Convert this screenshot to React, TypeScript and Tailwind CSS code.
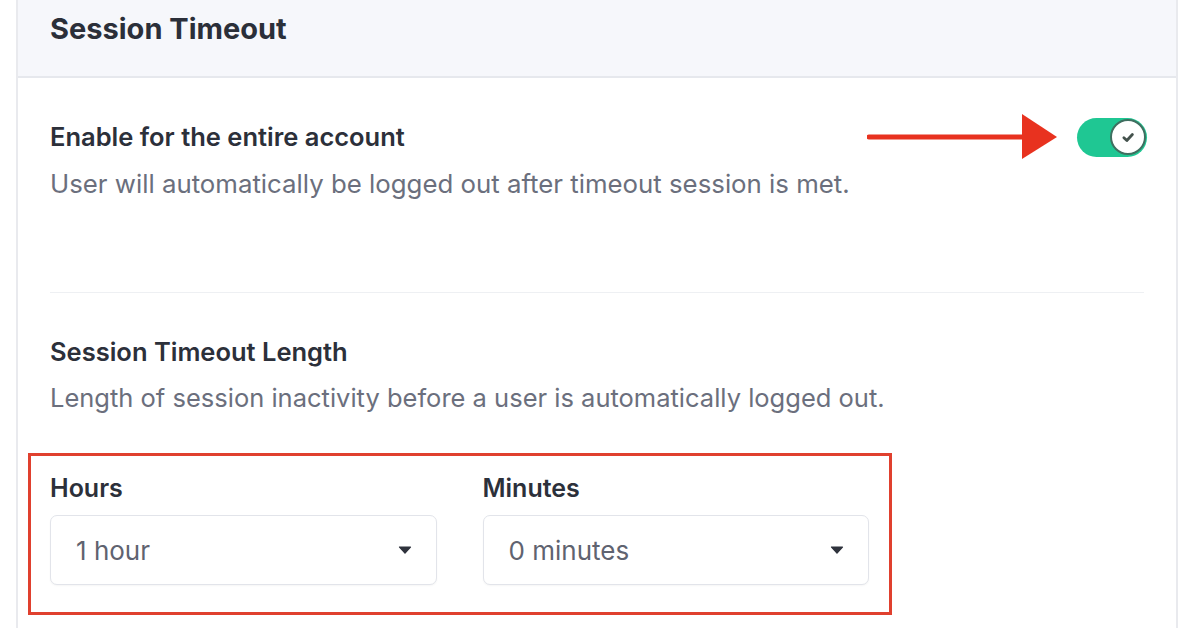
// Session timeout settings card — account-wide toggle and timeout length selects
import { useState } from 'react'

function Toggle({ on, onChange }: { on: boolean; onChange: (v: boolean) => void }) {
  return (
    <button
      onClick={() => onChange(!on)}
      className={`relative flex h-[39px] w-[70px] shrink-0 items-center rounded-full px-[1px] ${
        on ? 'justify-end bg-[#1fc793]' : 'justify-start bg-[#d7dbe2]'
      }`}
    >
      <span className="flex h-[36px] w-[36px] items-center justify-center rounded-full border-[2px] border-[#3f6f60] bg-white">
        {on && (
          <svg width="18" height="18" viewBox="0 0 14 14" fill="none">
            <path d="M3.8 7.6l2.3 2.1 4.3-4.6" stroke="#44524d" strokeWidth="2.2" strokeLinecap="round" strokeLinejoin="round" />
          </svg>
        )}
      </span>
    </button>
  )
}

function SelectBox({ label, value }: { label: string; value: string }) {
  return (
    <div className="flex flex-col">
      <div className="mb-[15px] text-[25px] font-semibold leading-[24px] text-[#2c303a]">{label}</div>
      <div className="flex h-[70px] items-center justify-between rounded-[7px] border border-[#e2e4ea] bg-white pl-[25px] pr-[24px] shadow-[0_1px_2px_rgba(0,0,0,0.04)]">
        <span className="text-[26px] text-[#5f6370]">{value}</span>
        <svg width="14" height="8" viewBox="0 0 14 8">
          <path d="M1.5 1h11L7 7.2z" fill="#2f333d" stroke="#2f333d" strokeWidth="1.2" strokeLinejoin="round" />
        </svg>
      </div>
    </div>
  )
}

export default function App() {
  const [enabled, setEnabled] = useState(true)

  return (
    <div
      className="h-[628px] w-[1196px] overflow-hidden bg-white pl-[16px] pr-[18px]"
      style={{ fontFamily: 'Inter, "Open Sans", Arial, sans-serif' }}
    >
      <div className="h-full border-x-[2px] border-[#e9eaee]">
        {/* Header */}
        <div className="flex h-[78px] items-center border-b-[2px] border-[#e6e8ed] bg-[#f6f7fb] px-[32px] pb-[18px]">
          <h1 className="text-[29px] font-bold text-[#2b2f39]">Session Timeout</h1>
        </div>

        <div className="px-[32px]">
          {/* Enable row */}
          <div className="relative flex items-start justify-between pt-[40px]">
            <div>
              <div className="text-[25.5px] font-semibold leading-[38px] text-[#2c303a]">Enable for the entire account</div>
              <div className="mt-[13px] text-[25.8px] leading-[30px] text-[#6b6f7d]">
                User will automatically be logged out after timeout session is met.
              </div>
            </div>
            <div className="mr-[-3px] mt-[-4px] flex items-center">
              {/* annotation arrow */}
              <svg className="mr-[18px]" width="192" height="46" viewBox="0 0 192 46">
                <line x1="2" y1="23" x2="160" y2="23" stroke="#e8321f" strokeWidth="5" strokeLinecap="round" />
                <path d="M155 0L190 23L155 45z" fill="#e8321f" />
              </svg>
              <Toggle on={enabled} onChange={setEnabled} />
            </div>
          </div>

          <div className="mt-[93px] h-px bg-[#eef0f3]" />

          {/* Timeout length */}
          <div className="pt-[44px]">
            <div className="text-[25.5px] font-semibold leading-[30px] text-[#2c303a]">Session Timeout Length</div>
            <div className="mt-[16px] text-[25.5px] leading-[30px] text-[#6b6f7d]">
              Length of session inactivity before a user is automatically logged out.
            </div>
          </div>

          <div className="ml-[-22px] mt-[40px] w-[864px] border-[3px] border-[#e0402e] pb-[27px] pl-[19px] pr-[20px] pt-[20px]">
            <div className="grid grid-cols-2 gap-[46px]">
              <SelectBox label="Hours" value="1 hour" />
              <SelectBox label="Minutes" value="0 minutes" />
            </div>
          </div>
        </div>
      </div>
    </div>
  )
}
